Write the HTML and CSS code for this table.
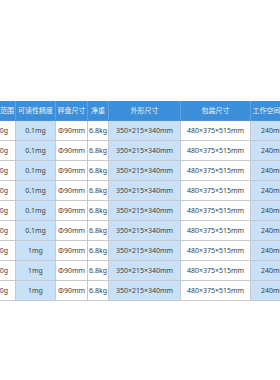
FILE: index.html
```html
<!DOCTYPE html>
<html lang="zh">
<head>
<meta charset="utf-8">
<title>参数表</title>
<link rel="stylesheet" href="styles.css">
</head>
<body>
<div class="frame">
  <table class="spec">
    <colgroup>
      <col class="c1"><col class="c2"><col class="c3"><col class="c4"><col class="c5"><col class="c6"><col class="c7">
    </colgroup>
    <thead>
      <tr>
        <th>称量范围</th><th>可读性精度</th><th>秤盘尺寸</th><th>净重</th><th>外形尺寸</th><th>包装尺寸</th><th>工作空间尺寸</th>
      </tr>
    </thead>
    <tbody>
      <tr><td>120g</td><td class="hl">0.1mg</td><td>Φ90mm</td><td>6.8kg</td><td class="hl">350×215×340mm</td><td>480×375×515mm</td><td class="hl">240mm</td></tr>
      <tr><td>220g</td><td class="hl">0.1mg</td><td>Φ90mm</td><td>6.8kg</td><td class="hl">350×215×340mm</td><td>480×375×515mm</td><td class="hl">240mm</td></tr>
      <tr><td>320g</td><td class="hl">0.1mg</td><td>Φ90mm</td><td>6.8kg</td><td class="hl">350×215×340mm</td><td>480×375×515mm</td><td class="hl">240mm</td></tr>
      <tr><td>120g</td><td class="hl">0.1mg</td><td>Φ90mm</td><td>6.8kg</td><td class="hl">350×215×340mm</td><td>480×375×515mm</td><td class="hl">240mm</td></tr>
      <tr><td>220g</td><td class="hl">0.1mg</td><td>Φ90mm</td><td>6.8kg</td><td class="hl">350×215×340mm</td><td>480×375×515mm</td><td class="hl">240mm</td></tr>
      <tr><td>320g</td><td class="hl">0.1mg</td><td>Φ90mm</td><td>6.8kg</td><td class="hl">350×215×340mm</td><td>480×375×515mm</td><td class="hl">240mm</td></tr>
      <tr><td>120g</td><td class="hl">1mg</td><td>Φ90mm</td><td>6.8kg</td><td class="hl">350×215×340mm</td><td>480×375×515mm</td><td class="hl">240mm</td></tr>
      <tr><td>220g</td><td class="hl">1mg</td><td>Φ90mm</td><td>6.8kg</td><td class="hl">350×215×340mm</td><td>480×375×515mm</td><td class="hl">240mm</td></tr>
      <tr><td>320g</td><td class="hl">1mg</td><td>Φ90mm</td><td>6.8kg</td><td class="hl">350×215×340mm</td><td>480×375×515mm</td><td class="hl">240mm</td></tr>
    </tbody>
  </table>
</div>
</body>
</html>
```
FILE: styles.css
```css
html, body {
  margin: 0;
  padding: 0;
  background: #ffffff;
}
.frame {
  width: 280px;
  height: 380px;
  overflow: hidden;
  padding-top: 101px;
  box-sizing: border-box;
}
.spec {
  margin-left: -15px;
  border-collapse: separate;
  border-spacing: 0;
  table-layout: fixed;
  width: 312px;
  font-family: "Noto Sans", "Noto Sans CJK SC", sans-serif;
  font-size: 7px;
  color: #3d3d3d;
}
.c1 { width: 31px; }
.c2 { width: 40px; }
.c3 { width: 32px; }
.c4 { width: 21px; }
.c5 { width: 72px; }
.c6 { width: 70px; }
.c7 { width: 46px; }
.spec th,
.spec td {
  box-sizing: border-box;
  height: 20px;
  padding: 0;
  text-align: center;
  vertical-align: middle;
  white-space: nowrap;
  overflow: hidden;
  line-height: 10px;
}
.spec th {
  background: #3d8ed8;
  color: #e9f3fc;
  font-weight: normal;
  border-right: 1px solid #5fa3e3;
  border-bottom: 1px solid #4a92d6;
}
.spec td {
  background: #ffffff;
  border-right: 1px solid #c3cad2;
  border-bottom: 1px solid #c3cad2;
}
.spec td.hl {
  background: #c8e1f7;
}
```
